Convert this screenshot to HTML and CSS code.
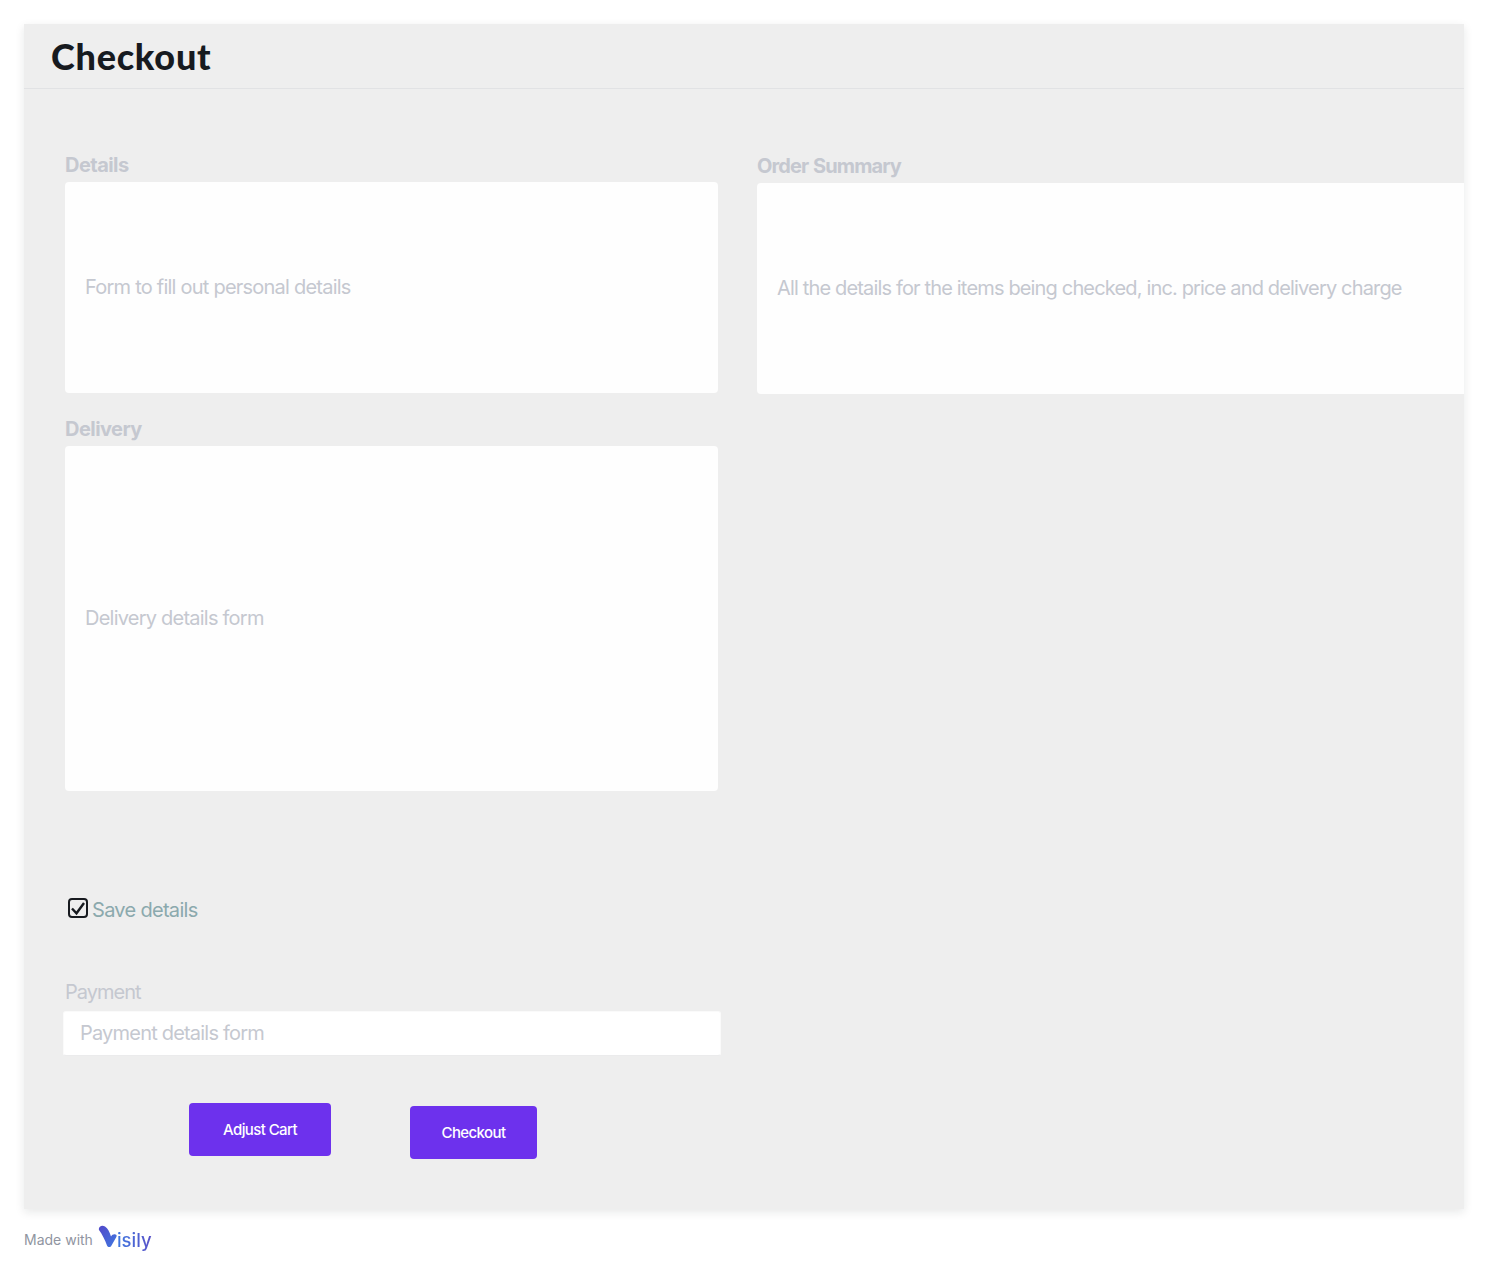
FILE: index.html
```html
<!DOCTYPE html>
<html lang="en">
<head>
<meta charset="utf-8">
<title>Checkout</title>
<link rel="stylesheet" href="styles.css">
</head>
<body>
<div class="frame">
  <header class="topbar"><h1 class="title">Checkout</h1></header>
  <main class="content">
    <div class="columns">
      <section class="col-left">
        <h2 class="label">Details</h2>
        <div class="card card-details"><p class="card-text">Form to fill out personal details</p></div>
        <h2 class="label label-delivery">Delivery</h2>
        <div class="card card-delivery"><p class="card-text">Delivery details form</p></div>
      </section>
      <section class="col-right">
        <h2 class="label label-summary">Order Summary</h2>
        <div class="card card-summary"><p class="card-text">All the details for the items being checked, inc. price and delivery charge</p></div>
      </section>
    </div>
    <div class="save">
      <svg class="check" width="20" height="20" viewBox="0 0 20 20" aria-hidden="true">
        <rect x="1" y="1" width="18" height="18" rx="3" fill="none" stroke="#171a1f" stroke-width="2"/>
        <path d="M4 10.500l4.500 4.800L16 5" fill="none" stroke="#171a1f" stroke-width="2.400"/>
      </svg>
      <span class="save-text">Save details</span>
    </div>
    <div class="payment-label">Payment</div>
    <div class="payment-input">Payment details form</div>
    <div class="actions">
      <button class="btn btn-adjust">Adjust Cart</button>
      <button class="btn btn-checkout">Checkout</button>
    </div>
  </main>
</div>
<footer class="made">
  <span class="made-text">Made with</span>
  <span class="brand">
    <svg class="brand-v" width="20" height="24" viewBox="0 0 20 24" aria-hidden="true">
      <defs><linearGradient id="vg" x1="0" y1="0" x2="1" y2="1"><stop offset="0" stop-color="#5248c9"/><stop offset="1" stop-color="#3f78e0"/></linearGradient></defs>
      <path d="M1 5C0 1.500 4-.5 7 1.500 10 3.500 11.500 7 13 11.500 14 10 15.500 9 17.500 9.500 19 10 18.800 11.200 18.200 12.200L13.500 20.500C12.500 22.500 10 22.500 9 20.500 7 15 4 9 1 5Z" fill="url(#vg)"/>
    </svg><span class="brand-text">isily</span>
  </span>
</footer>
</body>
</html>
```
FILE: styles.css
```css
* { box-sizing: border-box; }
html, body { margin: 0; padding: 0; }
body {
  background: #fff;
  font-family: Inter, "Liberation Sans", sans-serif;
  height: 1272px;
  overflow: hidden;
}
.frame {
  margin: 24px 24px 0;
  width: 1440px;
  height: 1185px;
  background: #eeeeee;
  box-shadow: 0 3px 9px rgba(23, 26, 31, 0.1);
  overflow: hidden;
}
.topbar {
  height: 65px;
  border-bottom: 1px solid #e1e2e4;
  padding-left: 27px;
  display: flex;
  align-items: center;
}
.title {
  margin: 0;
  font-family: Lato, Inter, sans-serif;
  font-size: 36px;
  font-weight: 900;
  line-height: 48px;
  letter-spacing: 0.75px;
  color: #171a1f;
}
.content { padding: 64px 0 0 41px; }
.columns { display: flex; gap: 39px; height: 742px; }
.col-left { width: 653px; flex: none; }
.col-right { width: 708px; flex: none; margin-top: 1px; }
.label {
  margin: 0 0 5px;
  font-size: 20px;
  line-height: 24px;
  font-weight: 700;
  letter-spacing: -0.55px;
  color: #c5c8d0;
}
.label-delivery { margin: 24px 0 5px; }
.label-summary { letter-spacing: -0.9px; word-spacing: 1px; }
.card {
  background: #fefefe;
  border-radius: 4px;
  display: flex;
  align-items: center;
  padding: 0 0 2px 20px;
}
.card-details, .card-summary { height: 211px; }
.card-summary { border-radius: 4px 0 0 4px; }
.card-delivery { height: 345px; }
.card-text {
  margin: 0;
  font-size: 20px;
  line-height: 28px;
  letter-spacing: -0.77px;
  color: #c5c8d0;
}
.card-summary .card-text { letter-spacing: -0.84px; }
.save {
  display: flex;
  align-items: center;
  gap: 4px;
  margin: 0 0 0 3px;
  height: 30px;
}
.check { flex: none; margin-top: -4px; }
.save-text {
  font-size: 20px;
  letter-spacing: -0.7px;
  color: #8ba9ad;
}
.payment-label {
  margin-top: 52px;
  height: 30px;
  line-height: 30px;
  font-size: 20px;
  letter-spacing: -1px;
  color: #c5c8d0;
}
.payment-input {
  margin: 4px 0 0 -2px;
  width: 658px;
  height: 45px;
  background: #fff;
  border: 1px solid #fafafa;
  border-bottom-color: #ebebec;
  border-radius: 3px;
  padding-left: 16px;
  line-height: 42px;
  font-size: 20px;
  letter-spacing: -0.8px;
  color: #c5c8d0;
}
.actions { display: flex; align-items: flex-start; margin: 47px 0 0 124px; }
.btn {
  height: 53px;
  border: 0;
  border-radius: 4px;
  background: #6d31ed;
  color: #fff;
  font-family: Inter, sans-serif;
  font-size: 15px;
  font-weight: 500;
  letter-spacing: -0.6px;
  padding: 0;
}
.btn-adjust { width: 142px; }
.btn-checkout { width: 127px; margin: 3px 0 0 79px; }
.made {
  margin: 16px 0 0 24px;
  display: flex;
  align-items: center;
  height: 30px;
}
.made-text {
  font-size: 14px;
  padding-bottom: 2px;
  color: #9095a1;
}
.brand { display: flex; align-items: center; margin-left: 5px; }
.brand-v { margin-top: -6px; }
.brand-text {
  margin-left: -1px;
  font-size: 18.500px;
  font-weight: 500;
  letter-spacing: 0;
  background: linear-gradient(90deg, #3f78e0, #5a52c8);
  -webkit-background-clip: text;
  background-clip: text;
  color: transparent;
}
```
